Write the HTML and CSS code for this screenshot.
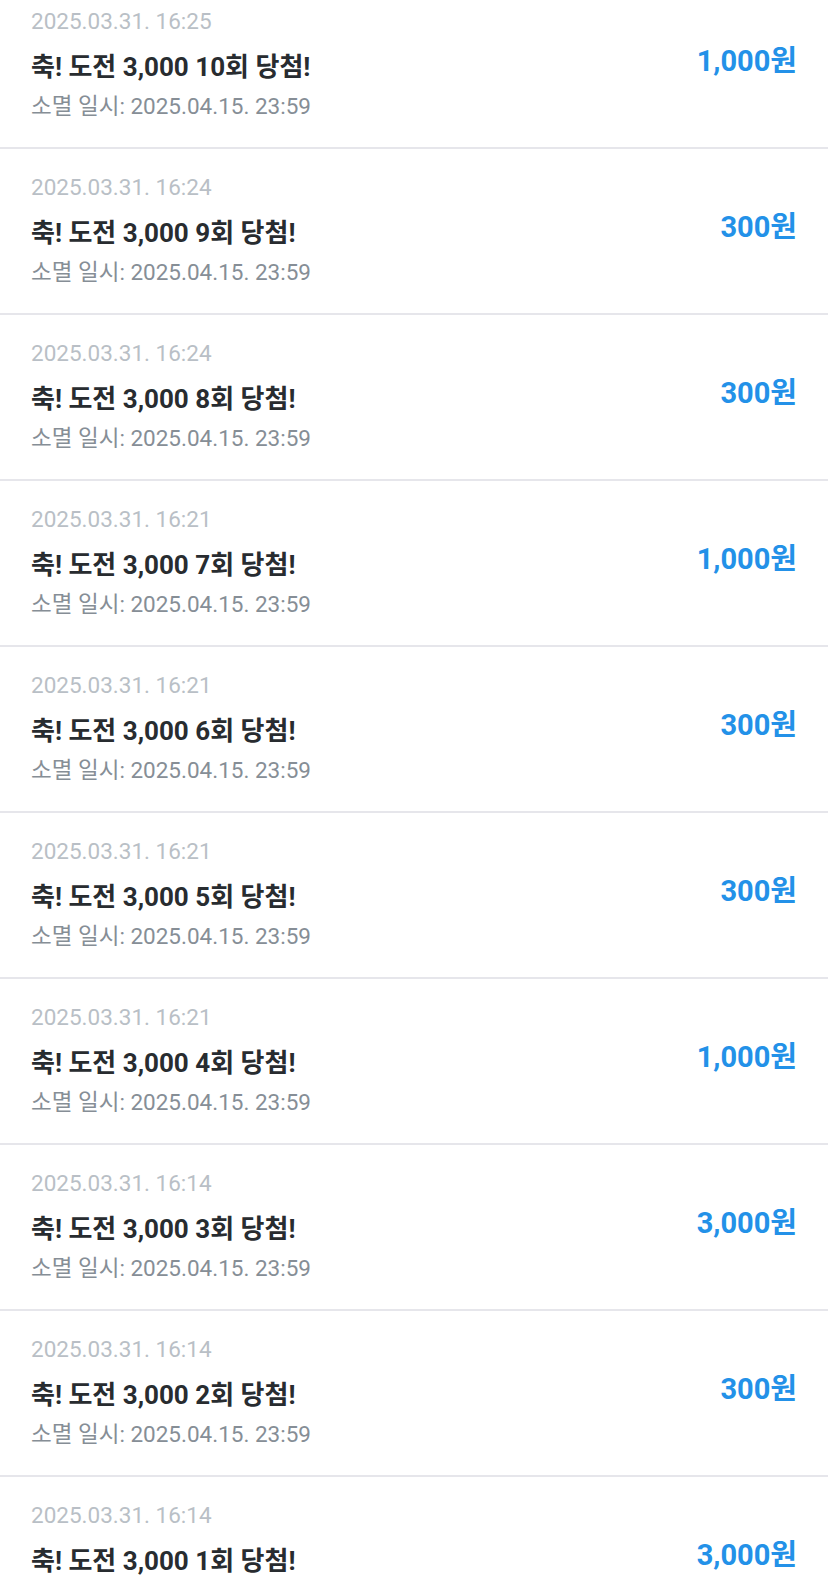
FILE: index.html
```html
<!DOCTYPE html>
<html lang="ko">
<head>
<meta charset="utf-8">
<link rel="stylesheet" href="styles.css">
</head>
<body>
<div class="list">
  <div class="row"><div class="info"><div class="time">2025.03.31. 16:25</div><div class="title">축! 도전 3,000 10회 당첨!</div><div class="expire">소멸 일시: 2025.04.15. 23:59</div></div><div class="amount">1,000원</div></div>
  <div class="row"><div class="info"><div class="time">2025.03.31. 16:24</div><div class="title">축! 도전 3,000 9회 당첨!</div><div class="expire">소멸 일시: 2025.04.15. 23:59</div></div><div class="amount">300원</div></div>
  <div class="row"><div class="info"><div class="time">2025.03.31. 16:24</div><div class="title">축! 도전 3,000 8회 당첨!</div><div class="expire">소멸 일시: 2025.04.15. 23:59</div></div><div class="amount">300원</div></div>
  <div class="row"><div class="info"><div class="time">2025.03.31. 16:21</div><div class="title">축! 도전 3,000 7회 당첨!</div><div class="expire">소멸 일시: 2025.04.15. 23:59</div></div><div class="amount">1,000원</div></div>
  <div class="row"><div class="info"><div class="time">2025.03.31. 16:21</div><div class="title">축! 도전 3,000 6회 당첨!</div><div class="expire">소멸 일시: 2025.04.15. 23:59</div></div><div class="amount">300원</div></div>
  <div class="row"><div class="info"><div class="time">2025.03.31. 16:21</div><div class="title">축! 도전 3,000 5회 당첨!</div><div class="expire">소멸 일시: 2025.04.15. 23:59</div></div><div class="amount">300원</div></div>
  <div class="row"><div class="info"><div class="time">2025.03.31. 16:21</div><div class="title">축! 도전 3,000 4회 당첨!</div><div class="expire">소멸 일시: 2025.04.15. 23:59</div></div><div class="amount">1,000원</div></div>
  <div class="row"><div class="info"><div class="time">2025.03.31. 16:14</div><div class="title">축! 도전 3,000 3회 당첨!</div><div class="expire">소멸 일시: 2025.04.15. 23:59</div></div><div class="amount">3,000원</div></div>
  <div class="row"><div class="info"><div class="time">2025.03.31. 16:14</div><div class="title">축! 도전 3,000 2회 당첨!</div><div class="expire">소멸 일시: 2025.04.15. 23:59</div></div><div class="amount">300원</div></div>
  <div class="row"><div class="info"><div class="time">2025.03.31. 16:14</div><div class="title">축! 도전 3,000 1회 당첨!</div><div class="expire">소멸 일시: 2025.04.15. 23:59</div></div><div class="amount">3,000원</div></div>
</div>
</body>
</html>
```
FILE: styles.css
```css
html, body {
  margin: 0;
  padding: 0;
  background: #ffffff;
  overflow: hidden;
}
body {
  font-family: Roboto, "Noto Sans CJK KR", sans-serif;
  height: 1588px;
}
.list {
  margin-top: -17px;
}
.row {
  display: flex;
  justify-content: space-between;
  align-items: flex-start;
  height: 164px;
  box-sizing: content-box;
  padding: 0 31px;
  border-bottom: 2px solid #e6e6eb;
}
.info {
  display: flex;
  flex-direction: column;
  padding-top: 23px;
}
.time {
  font-size: 22.5px;
  line-height: 30px;
  color: #b9bfc6;
}
.title {
  margin-top: 14px;
  font-size: 26px;
  line-height: 34px;
  font-weight: 700;
  color: #282c30;
  white-space: nowrap;
}
.expire {
  margin-top: 7px;
  font-size: 22.5px;
  line-height: 30px;
  color: #868e96;
  white-space: nowrap;
}
.amount {
  margin-top: 60px;
  font-size: 29px;
  line-height: 36px;
  font-weight: 700;
  color: #2391e8;
  white-space: nowrap;
}
```
